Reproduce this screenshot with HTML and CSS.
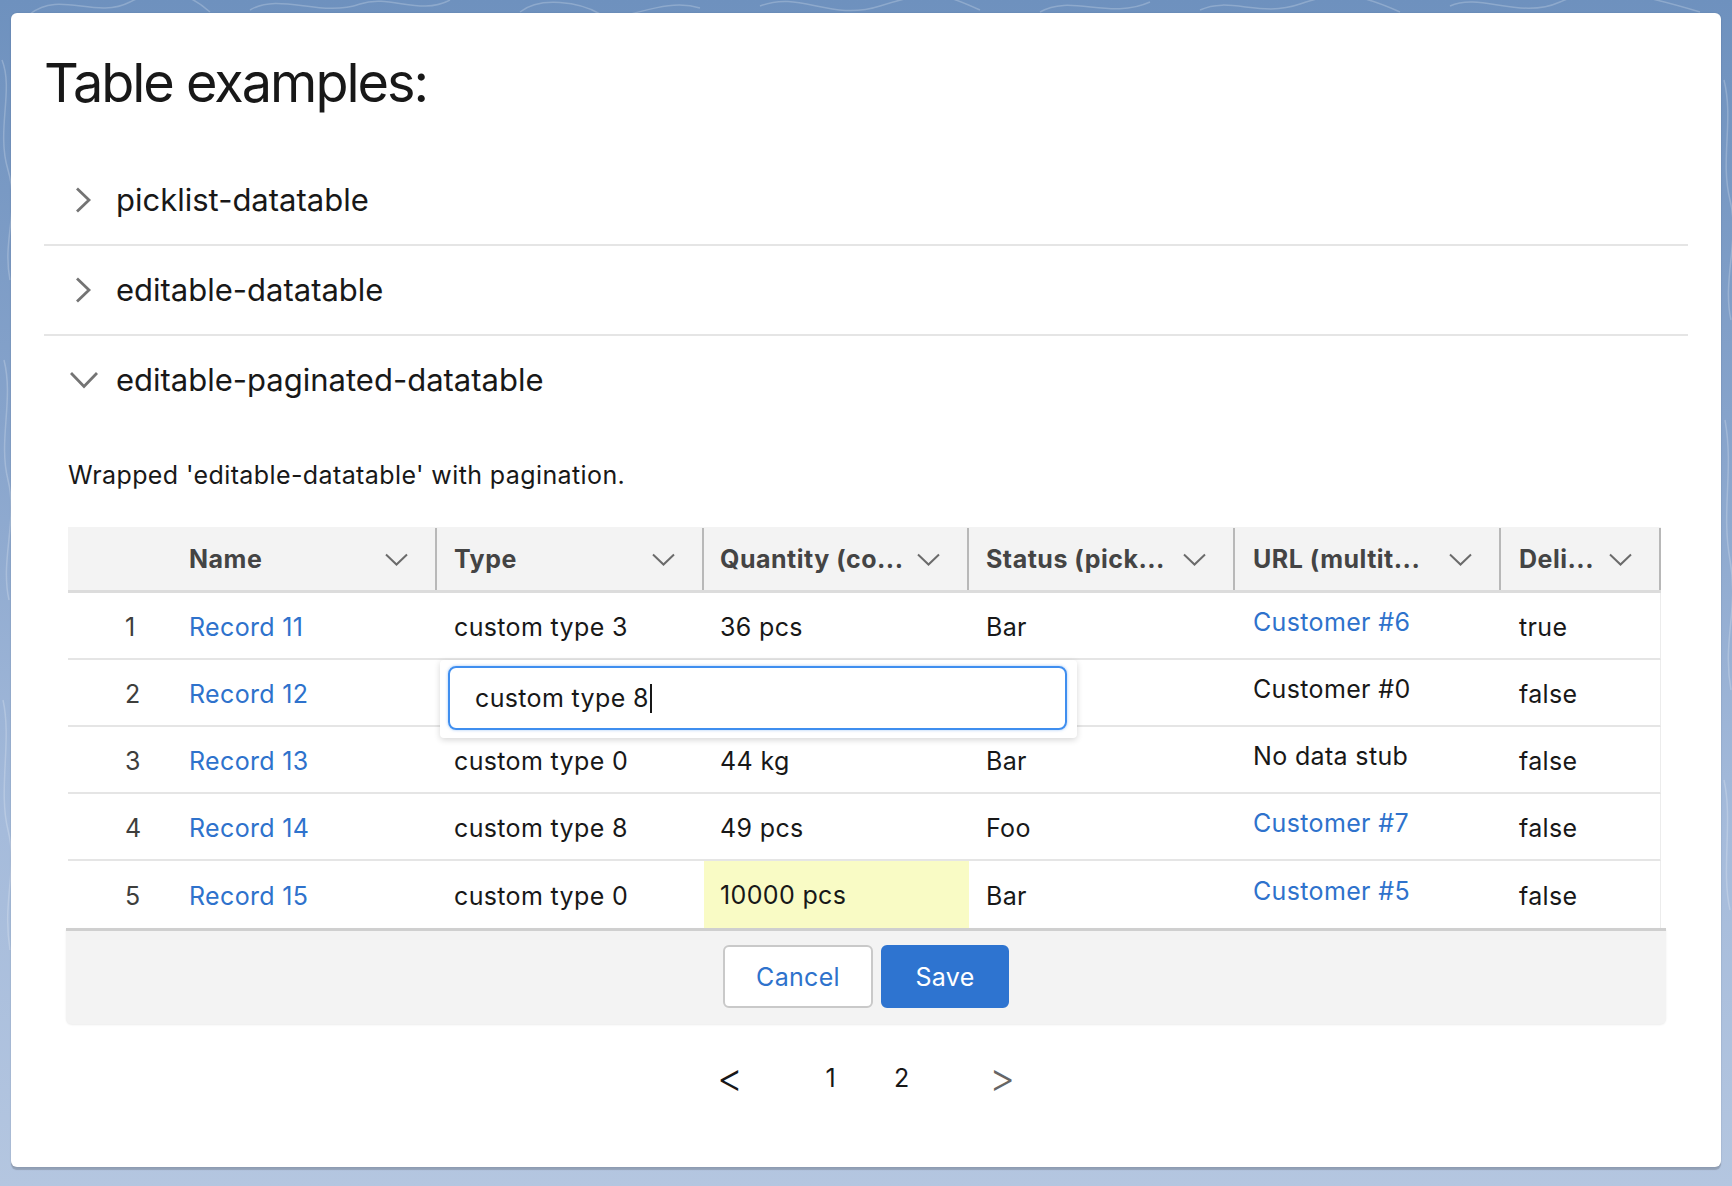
FILE: index.html
```html
<!DOCTYPE html>
<html lang="en">
<head>
<meta charset="utf-8">
<title>Table examples</title>
<link rel="stylesheet" href="styles.css">
</head>
<body>
<svg class="bg-swirls" width="1732" height="1186" viewBox="0 0 1732 1186" aria-hidden="true">
  <g fill="none" stroke="#ffffff" stroke-opacity="0.22" stroke-width="1.5">
    <path d="M30 14 C60 -10 95 20 130 2 S190 -6 210 12"/>
    <path d="M250 10 C280 -8 320 18 360 4 C390 -6 420 16 450 0"/>
    <path d="M520 12 C540 -4 580 2 600 14 S660 -4 700 8"/>
    <path d="M760 6 C800 -10 830 22 880 6 S940 -8 980 10"/>
    <path d="M1040 12 C1070 -6 1110 20 1150 2"/>
    <path d="M1200 10 C1230 -4 1260 18 1300 4 S1360 -6 1400 12"/>
    <path d="M1450 6 C1480 -8 1520 20 1560 2 S1640 -6 1700 12"/>
    <path d="M2 60 C14 90 -4 130 8 170 S2 240 10 280"/>
    <path d="M4 360 C14 400 -2 440 8 480 S0 560 9 600"/>
    <path d="M3 700 C12 740 -2 790 8 830 S2 900 10 950"/>
    <path d="M1724 80 C1734 120 1720 160 1730 200 S1722 280 1731 320"/>
    <path d="M1725 420 C1734 470 1721 510 1730 560 S1722 640 1731 690"/>
    <path d="M1724 780 C1733 820 1721 870 1730 910"/>
  </g>
</svg>
<div class="card">
  <h1 class="title">Table examples:</h1>
  <div class="accordion">
    <section class="acc-item">
      <div class="acc-head">
        <span class="acc-icon"><svg width="28" height="28" viewBox="0 0 28 28"><path d="M7 2.5 L19 14 L7 25.5" fill="none" stroke="#747474" stroke-width="2.8"/></svg></span>
        <span class="acc-label">picklist-datatable</span>
      </div>
    </section>
    <section class="acc-item">
      <div class="acc-head">
        <span class="acc-icon"><svg width="28" height="28" viewBox="0 0 28 28"><path d="M7 2.5 L19 14 L7 25.5" fill="none" stroke="#747474" stroke-width="2.8"/></svg></span>
        <span class="acc-label">editable-datatable</span>
      </div>
    </section>
    <section class="acc-item open">
      <div class="acc-head">
        <span class="acc-icon"><svg width="28" height="28" viewBox="0 0 28 28"><path d="M1 7 L14 20.5 L27 7" fill="none" stroke="#747474" stroke-width="2.8"/></svg></span>
        <span class="acc-label">editable-paginated-datatable</span>
      </div>
      <div class="acc-body">
        <p class="desc">Wrapped 'editable-datatable' with pagination.</p>
        <div class="dt">
          <div class="dt-head">
            <div class="th th-num"></div>
            <div class="th th-name"><span class="th-text">Name</span><svg class="th-chev" width="23" height="13" viewBox="0 0 23 13"><path d="M1 1.5 L11.5 11.5 L22 1.5" fill="none" stroke="#6b6b6b" stroke-width="2"/></svg></div>
            <div class="th th-type"><span class="th-text">Type</span><svg class="th-chev" width="23" height="13" viewBox="0 0 23 13"><path d="M1 1.5 L11.5 11.5 L22 1.5" fill="none" stroke="#6b6b6b" stroke-width="2"/></svg></div>
            <div class="th th-qty"><span class="th-text">Quantity (co...</span><svg class="th-chev" width="23" height="13" viewBox="0 0 23 13"><path d="M1 1.5 L11.5 11.5 L22 1.5" fill="none" stroke="#6b6b6b" stroke-width="2"/></svg></div>
            <div class="th th-status"><span class="th-text">Status (pick...</span><svg class="th-chev" width="23" height="13" viewBox="0 0 23 13"><path d="M1 1.5 L11.5 11.5 L22 1.5" fill="none" stroke="#6b6b6b" stroke-width="2"/></svg></div>
            <div class="th th-url"><span class="th-text">URL (multit...</span><svg class="th-chev" width="23" height="13" viewBox="0 0 23 13"><path d="M1 1.5 L11.5 11.5 L22 1.5" fill="none" stroke="#6b6b6b" stroke-width="2"/></svg></div>
            <div class="th th-deli"><span class="th-text">Deli...</span><svg class="th-chev" width="23" height="13" viewBox="0 0 23 13"><path d="M1 1.5 L11.5 11.5 L22 1.5" fill="none" stroke="#6b6b6b" stroke-width="2"/></svg></div>
          </div>

          <div class="dt-row">
            <div class="td td-num">1</div>
            <div class="td td-name"><a class="link">Record 11</a></div>
            <div class="td td-type">custom type 3</div>
            <div class="td td-qty">36 pcs</div>
            <div class="td td-status">Bar</div>
            <div class="td td-url"><a class="link">Customer #6</a></div>
            <div class="td td-deli">true</div>
          </div>
          <div class="dt-row">
            <div class="td td-num">2</div>
            <div class="td td-name"><a class="link">Record 12</a></div>
            <div class="td td-type"></div>
            <div class="td td-qty"></div>
            <div class="td td-status"></div>
            <div class="td td-url">Customer #0</div>
            <div class="td td-deli">false</div>
          </div>
          <div class="dt-row">
            <div class="td td-num">3</div>
            <div class="td td-name"><a class="link">Record 13</a></div>
            <div class="td td-type">custom type 0</div>
            <div class="td td-qty">44 kg</div>
            <div class="td td-status">Bar</div>
            <div class="td td-url">No data stub</div>
            <div class="td td-deli">false</div>
          </div>
          <div class="dt-row">
            <div class="td td-num">4</div>
            <div class="td td-name"><a class="link">Record 14</a></div>
            <div class="td td-type">custom type 8</div>
            <div class="td td-qty">49 pcs</div>
            <div class="td td-status">Foo</div>
            <div class="td td-url"><a class="link">Customer #7</a></div>
            <div class="td td-deli">false</div>
          </div>
          <div class="dt-row last">
            <div class="td td-num">5</div>
            <div class="td td-name"><a class="link">Record 15</a></div>
            <div class="td td-type">custom type 0</div>
            <div class="td td-qty edited">10000 pcs</div>
            <div class="td td-status">Bar</div>
            <div class="td td-url"><a class="link">Customer #5</a></div>
            <div class="td td-deli">false</div>
          </div>

          <div class="popover">
            <div class="pop-input">custom type 8<span class="caret"></span></div>
          </div>

          <div class="dt-footer">
            <button class="btn btn-neutral">Cancel</button>
            <button class="btn btn-brand">Save</button>
          </div>
        </div>

        <nav class="pager">
          <span class="pg-arrow">&lt;</span>
          <span class="pg-nums"><span class="pg-num">1</span><span class="pg-num">2</span></span>
          <span class="pg-arrow disabled">&gt;</span>
        </nav>
      </div>
    </section>
  </div>
</div>
</body>
</html>
```

FILE: styles.css
```css
* { box-sizing: border-box; }

html, body { height: 100%; }

body {
  position: relative;
  margin: 0;
  padding: 13px 11px 0 11px;
  font-family: Inter, "Liberation Sans", sans-serif;
  color: #181818;
  background: linear-gradient(180deg, #6e91be 0%, #86a3cb 35%, #a5bbdb 70%, #b4c6e0 100%);
  overflow: hidden;
}

.bg-swirls {
  position: absolute;
  left: 0;
  top: 0;
  z-index: 0;
}

.card {
  position: relative;
  z-index: 1;
  width: 1710px;
  height: 1154px;
  background: #fff;
  border-radius: 6px;
  box-shadow: 0 3px 1px rgba(0, 0, 0, 0.18), 0 0 2px rgba(0, 0, 0, 0.12);
  padding: 37px 33px 0 33px;
}

.title {
  margin: 0;
  font-size: 54px;
  line-height: 65px;
  font-weight: 400;
  letter-spacing: -2px;
  color: #181818;
}

.accordion {
  margin-top: 41px;
}

.acc-item {
  border-bottom: 2px solid #e5e5e5;
}

.acc-item.open {
  border-bottom: none;
}

.acc-head {
  height: 88px;
  display: flex;
  align-items: center;
  padding-left: 26px;
  gap: 18px;
}

.acc-icon {
  width: 28px;
  height: 28px;
  display: flex;
}

.acc-label {
  font-size: 31px;
  line-height: 40px;
  color: #181818;
}

.acc-body {
  padding: 0 27px 0 24px;
}

.desc {
  margin: 36px 0 0 0;
  font-size: 25px;
  line-height: 30px;
  letter-spacing: 0.4px;
}

.dt {
  position: relative;
  margin-top: 37px;
  width: 1593px;
  font-size: 25px;
  letter-spacing: 0.35px;
}

.dt-head,
.dt-row {
  display: grid;
  grid-template-columns: 110px 259px 267px 265px 266px 266px 160px;
}

.dt-head {
  height: 66px;
  background: #f3f3f3;
  border-bottom: 3px solid #dcdcdc;
  padding-top: 1px;
}

.th {
  display: flex;
  align-items: center;
  min-width: 0;
  padding-right: 27px;
  border-right: 2px solid #b8b8b8;
  font-weight: 700;
  letter-spacing: 0.5px;
  color: #444444;
}

.th-num { border-right: none; }

.th-text {
  flex: 1;
  min-width: 0;
  white-space: nowrap;
  overflow: hidden;
}

.th-chev {
  flex: none;
  margin-left: 8px;
}

.th-name { padding-left: 11px; }
.th-type { padding-left: 17px; }
.th-qty { padding-left: 16px; }
.th-status { padding-left: 17px; }
.th-url { padding-left: 18px; }
.th-deli { padding-left: 18px; }

.dt-row {
  height: 67px;
  border-bottom: 2px solid #e5e5e5;
  border-right: 1px solid #ececec;
  padding-top: 3px;
}

.dt-row.last { border-bottom: none; }

.td {
  display: flex;
  align-items: center;
  white-space: nowrap;
  color: #181818;
}

.td-num { padding-left: 57px; color: #3e3e3c; }
.td-name { padding-left: 11px; }
.td-type { padding-left: 17px; }
.td-qty { padding-left: 16px; }
.td-status { padding-left: 17px; }
.td-url { padding-left: 18px; padding-bottom: 10px; }
.td-deli { padding-left: 18px; }

.td.edited { background: #f9fbc5; margin-top: -3px; }

.link {
  color: #2e72cc;
  text-decoration: none;
}

.popover {
  position: absolute;
  left: 372px;
  top: 133px;
  width: 637px;
  height: 78px;
  background: #fff;
  border-radius: 4px;
  box-shadow: 0 2px 6px rgba(0, 0, 0, 0.16);
  padding: 6px 10px 0 8px;
}

.pop-input {
  height: 64px;
  border: 2px solid #3f8eef;
  border-radius: 8px;
  box-shadow: 0 0 3px rgba(63, 142, 239, 0.5);
  display: flex;
  align-items: center;
  padding-left: 25px;
  font-size: 25px;
  letter-spacing: 0.35px;
  color: #181818;
}

.caret {
  display: inline-block;
  width: 2px;
  height: 29px;
  background: #181818;
  margin-left: 1px;
}

.dt-footer {
  margin-left: -2px;
  width: 1600px;
  height: 96px;
  background: #f3f3f3;
  border-top: 3px solid #cfcfcf;
  border-radius: 0 0 6px 6px;
  box-shadow: 0 1px 2px rgba(0, 0, 0, 0.08);
  display: flex;
  align-items: center;
  justify-content: center;
  gap: 8px;
  padding-bottom: 2px;
}

.btn {
  height: 63px;
  border-radius: 6px;
  font-family: Inter, "Liberation Sans", sans-serif;
  font-size: 25px;
  letter-spacing: 0.3px;
  cursor: pointer;
}

.btn-neutral {
  width: 150px;
  background: #fff;
  border: 2px solid #c9c9c9;
  color: #2e72cc;
}

.btn-brand {
  width: 128px;
  background: #2e74d0;
  border: 2px solid #2e74d0;
  color: #fff;
}

.pager {
  margin-top: 24px;
  width: 1600px;
  height: 60px;
  display: flex;
  align-items: center;
  justify-content: center;
  gap: 35px;
  font-size: 25px;
  color: #181818;
  padding-right: 4px;
}

.pg-arrow {
  width: 60px;
  text-align: center;
  font-size: 40px;
  line-height: 40px;
  font-weight: 300;
  color: #181818;
}

.pg-arrow.disabled { color: #666666; }

.pg-nums { display: flex; }

.pg-num {
  width: 71px;
  text-align: center;
}
```
